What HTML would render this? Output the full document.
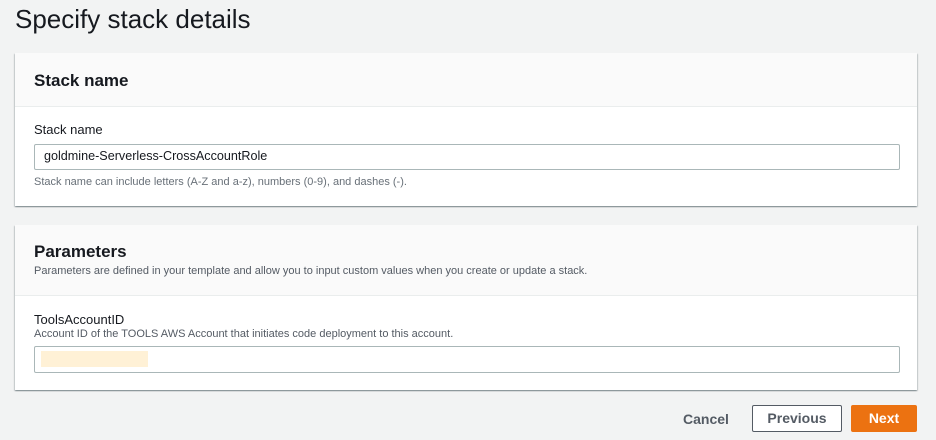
<!DOCTYPE html>
<html><head><meta charset="utf-8"><style>
body{margin:0;width:936px;height:440px;background:#f2f3f3;font-family:"Liberation Sans",sans-serif;color:#16191f;position:relative;overflow:hidden}
.a{position:absolute;white-space:nowrap}
.panel{position:absolute;left:15px;width:902px;background:#fff;box-shadow:0 1px 1px rgba(0,28,36,.3),1px 1px 1px rgba(0,28,36,.15),-1px 1px 1px rgba(0,28,36,.15)}
.hdr{position:absolute;left:0;top:0;width:100%;background:#fafafa;border-bottom:1px solid #eaeded}
.inp{position:absolute;left:19px;width:864px;border:1px solid #aab7b8;border-radius:2px;background:#fff}
.btn{position:absolute;top:405px;height:25px;border-radius:2px;font-weight:bold;font-size:14px;text-align:center;line-height:25px}
</style></head><body>
<div class="a" style="left:15px;top:4px;font-size:26px;">Specify stack details</div>
<div class="panel" style="top:53px;height:153px">
 <div class="hdr" style="height:53px"></div>
 <div class="a" style="left:19px;top:18px;font-size:17px;font-weight:bold">Stack name</div>
 <div class="a" style="left:19px;top:69px;font-size:13px">Stack name</div>
 <div class="inp" style="top:91px;height:24px"></div>
 <div class="a" style="left:29px;top:96px;font-size:12.6px">goldmine-Serverless-CrossAccountRole</div>
 <div class="a" style="left:19px;top:123px;font-size:11px;color:#687078">Stack name can include letters (A-Z and a-z), numbers (0-9), and dashes (-).</div>
</div>
<div class="panel" style="top:225px;height:165px">
 <div class="hdr" style="height:70px"></div>
 <div class="a" style="left:19px;top:17px;font-size:17px;font-weight:bold">Parameters</div>
 <div class="a" style="left:19px;top:40px;font-size:11px;color:#545b64">Parameters are defined in your template and allow you to input custom values when you create or update a stack.</div>
 <div class="a" style="left:19px;top:87px;font-size:13px">ToolsAccountID</div>
 <div class="a" style="left:19px;top:103px;font-size:11px;color:#545b64">Account ID of the TOOLS AWS Account that initiates code deployment to this account.</div>
 <div class="inp" style="top:121px;height:25px"></div>
 <div style="position:absolute;left:26px;top:126px;width:107px;height:16px;background:#fff1d6"></div>
</div>
<div class="a" style="left:683px;top:411px;font-size:14px;font-weight:bold;color:#545b64">Cancel</div>
<div class="btn" style="left:752px;width:88px;border:1px solid #545b64;background:#fff;color:#545b64">Previous</div>
<div class="btn" style="left:851px;width:66px;top:405px;height:27px;line-height:27px;background:#ec7211;color:#fff">Next</div>
</body></html>
